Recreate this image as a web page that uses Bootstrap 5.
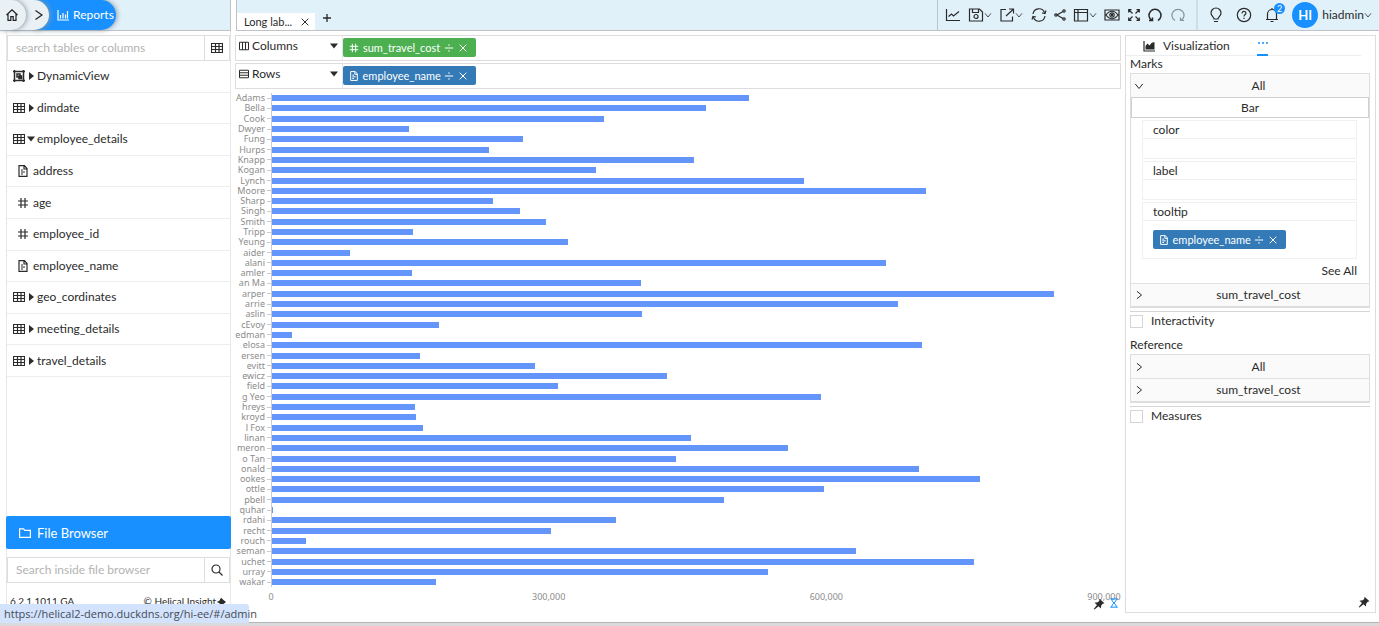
<!DOCTYPE html>
<html lang="en">
<head>
<meta charset="utf-8">
<meta name="viewport" content="width=device-width, initial-scale=1">
<title>Reports</title>
<link rel="stylesheet" href="https://cdn.jsdelivr.net/npm/bootstrap@5.3.0/dist/css/bootstrap.min.css">
<style>
:root{--sky:#e1f1fa;--line:#ddd;--edge:#bfc3c5;--blue:#1890ff;--ink:#2b2b2b}
body{font-family:Lato,"Liberation Sans",sans-serif;font-size:12px;line-height:16px;color:var(--ink);background:#fff}
button{font:inherit;color:inherit;background:none;border:0;padding:0}
svg{display:block;flex:none}
.ic{width:12px;height:12px;fill:none;stroke:currentColor;stroke-width:1.2}
.ic-lg{width:16px;height:16px}
.ic-sm{width:10px;height:10px}
.ic-xs{width:8px;height:8px}
.app{min-height:100vh}
.topbar{height:31px;gap:5px}
.topbar>div{background:var(--sky);border-bottom:1px solid var(--edge)}
.side-w{width:231px}
.crumb{height:30px;color:#222;box-shadow:1px 0 5px #8a9aa5;border-radius:0 15px 15px 0;background:#e9f1f5}
.c-home{width:26px;z-index:3;padding-left:6px}
.c-next{width:38px;margin-left:-15px;padding-left:23px;z-index:2}
.c-rep{width:83px;margin-left:-16px;padding-left:24px;background:var(--blue);color:#fff;gap:4px;text-decoration:none;z-index:1}
.tab{height:17px;width:78px;padding:0 5px 0 7px;background:#fff;font-size:11px}
.b-left{border-left:1px solid var(--edge)}
.b-right{border-right:1px solid var(--edge)}
.tools{width:442px}
.tools .acts{width:260px;padding:0 10px 0 7px;border-right:2px solid #cfdde5}
.tools .user{padding:0 7px 0 10px}
.avatar{width:26px;height:26px;background:var(--blue);color:#fff;font-size:13px;font-weight:700}
.count{width:11px;height:11px;right:-5px;top:-4px;background:var(--blue);color:#fff;font-size:9px;line-height:11px}
.sidebar{width:225px;margin-left:6px;border:solid #e6e6e6;border-width:0 1px}
.find{height:26px;border:1px solid var(--line)}
.find input{min-width:0;border:0;outline:0;padding:0 8px;font:inherit;color:#333}
.find input::placeholder{color:#b3b3b3;opacity:1}
.find button{width:25px;border-left:1px solid var(--line)}
.tree{height:316px}
.tree li{border-bottom:1px solid #eee}
.tree button{padding-left:6px;gap:2px}
.tree .leaf button{padding-left:10px;gap:4px}
.filebtn{height:33px;background:var(--blue);color:#fff;font-size:13px;border-radius:2px;padding-left:13px;gap:6px;margin:0 -1px 8px}
.foot{font-size:10px;height:39px;padding:10px 4px 0 3px}
.shelf{height:26px;border:1px solid var(--line)}
.shelf .pick{width:107px;border-right:1px solid #e6e6e6;padding:0 4px 4px 3px;gap:3px}
.pill{width:133px;height:19px;border-radius:2px;color:#fff;background:#337ab7;font-size:11px;padding:0 8px 0 6px}
.pill.num{background:#4caf50}
.chart{margin-right:17px;font-family:"Noto Sans",sans-serif;font-size:9px;line-height:10px;color:#8c8c8c}
.bars{height:494px}
.bars .name{width:30px;text-align:right}
.bars .tick{width:4px;height:1px;margin-left:2px;background:#ccc}
.bars .track{border-left:1px solid #ccc}
.bars .fill{height:6px;background:#6495fa}
.axis{margin-left:36px;height:12px;margin-top:5px}
.axis span{width:0}
.corner{right:2px;bottom:12px}
.props{width:251px;margin:4px 3px 9px 4px;border:1px solid var(--line);padding:0 5px 0 4px}
.vtabs{height:20px;margin:0 9px 0 -4px;border-bottom:1px solid #eee}
.vtabs .first{width:131px;padding-left:17px;gap:8px}
.vtabs .more{width:11px;height:20px;color:var(--blue);border-bottom:2px solid var(--blue)}
.panel{border:1px solid var(--line);border-bottom-width:2px}
.panel .hd{height:23px;background:#fafafa;padding-left:3px;border-top:1px solid #e2e2e2}
.panel .hd:first-child{border-top:0}
.panel .hd span{padding-right:4px}
.bar-btn{height:21px;border:1px solid #d0d0d0}
.slot{margin:2px 12px 0 11px;border:1px solid #f0f0f0}
.slot h3{font-size:inherit;line-height:17px;height:18px;padding-left:10px;margin:0;font-weight:400;border-bottom:1px solid #f0f0f0}
.slot .drop{min-height:19px;padding-left:10px}
.slot .drop.has{height:37px}
.rule{border-top:1px solid #d4d4d4;margin-top:3px;padding-top:1px}
.tick-box{appearance:none;width:13px;height:13px;border:1px solid #d5d5d5;background:#fff;margin:0}
.sec{height:17px}
.strip{height:4px;background:#d8dadb;border-top:1px solid #b5b5b5}
.url{left:0;bottom:3px;height:19px;width:249px;background:#d3e3fd;border-radius:0 3px 0 0;color:#444b55;font:11px/19px "Open Sans",sans-serif;padding-left:4px;z-index:5;text-decoration:none}
</style>
</head>
<body>
<svg width="0" height="0" class="position-absolute" aria-hidden="true">
<symbol id="grid" viewBox="0 0 12 12"><path d="M.5 1.5h11v9H.5zM.5 4.500h11M.5 7.500h11M4.500 1.500v9M8 1.500v9"/></symbol>
<symbol id="doc" viewBox="0 0 12 12"><path d="M2 .7h5.500L10 3.500v7.800H2zM7 .7V4h3M4 5h2M4 7h4M4 9h2"/></symbol>
<symbol id="hash" viewBox="0 0 12 12"><path d="M4 1v10M8 1v10M1 4h10M1 8h10"/></symbol>
<symbol id="right" viewBox="0 0 8 8"><path d="M2 0l5 4-5 4z" fill="currentColor" stroke="none"/></symbol>
<symbol id="down" viewBox="0 0 8 8"><path d="M0 1.500h8L4 6.500z" fill="currentColor" stroke="none"/></symbol>
<symbol id="x" viewBox="0 0 12 12"><path d="M2 2l8 8M10 2l-8 8"/></symbol>
<symbol id="divide" viewBox="0 0 12 12"><path d="M1 6h10M6 1.500v2M6 8.500v2"/></symbol>
<symbol id="chev" viewBox="0 0 12 12"><path d="M3.500 1.500L9 6l-5.500 4.500"/></symbol>
<symbol id="chevd" viewBox="0 0 12 12"><path d="M1.500 3.500L6 9l4.500-5.500"/></symbol>
<symbol id="pin" viewBox="0 0 12 12"><path d="M6.500.7l5 4.600-1.700.5-1.600 1.700-.3 3L5.500 8.300 1.500 11.500l-.8-.6L4 6.900 1.500 4.700l3.300-.4L6.300 2.700z" fill="currentColor" stroke="none"/></symbol>
</svg>
<div class="app d-flex flex-column position-relative">
<header class="topbar d-flex flex-none">
  <div class="side-w b-right d-flex flex-shrink-0">
    <button class="crumb c-home position-relative" aria-label="Home"><svg class="ic" viewBox="0 0 12 12"><path d="M.5 6L6 .8 11.500 6M2 5v6.400h2.800V7.600h2.400v3.800H10V5"/></svg></button>
    <button class="crumb c-next position-relative" aria-label="Next"><svg class="ic" viewBox="0 0 12 12"><path d="M1.500 1.500L8 6l-6.500 4.500"/></svg></button>
    <a href="#" class="crumb c-rep position-relative d-flex align-items-center"><svg class="ic" viewBox="0 0 12 12"><path d="M1 1v10h11M3.500 9.500V6M6 9.500V4M8.500 9.500V5.500M10.500 9.500V2"/></svg>Reports</a>
  </div>
  <div class="b-left flex-fill d-flex align-items-end">
    <div class="tab d-flex align-items-center justify-content-between"><span>Long lab...</span><button aria-label="Close"><svg class="ic ic-sm"><use href="#x"/></svg></button></div>
    <button class="ms-1 p-1 mb-1" aria-label="Add tab"><svg class="ic ic-xs" viewBox="0 0 12 12"><path stroke-width="2" d="M6 0v12M0 6h12"/></svg></button>
  </div>
  <div class="tools b-left d-flex flex-shrink-0" style="margin-left:-5px">
    <div class="acts d-flex align-items-center justify-content-between">
      <button aria-label="Chart"><svg class="ic ic-lg" viewBox="0 0 16 16"><path d="M1.500 2v11.500H15M3.500 9.500L6.500 7l2 2L14 4.500"/></svg></button>
      <button class="d-flex align-items-center" aria-label="Save"><svg class="ic ic-lg" viewBox="0 0 16 16"><path d="M1.500 2h10l3 3v9h-13zM4.500 2v3.500h6V2"/><circle cx="8" cy="9.500" r="2"/></svg><svg class="ic ic-xs"><use href="#chevd"/></svg></button>
      <button class="d-flex align-items-center" aria-label="Export"><svg class="ic ic-lg" viewBox="0 0 16 16"><path d="M7 2.500H2v11.500h11.500V9.500M7 9l7-6.500M10 2h4.500v4.500"/></svg><svg class="ic ic-xs"><use href="#chevd"/></svg></button>
      <button aria-label="Refresh"><svg class="ic ic-lg" viewBox="0 0 16 16"><path d="M2 7a6 6 0 0 1 11.500-1.500M14 9a6 6 0 0 1-11.500 1.500M11 6l3 .5 1-3M5 10l-3-.5-1 3"/></svg></button>
      <button aria-label="Share"><svg class="ic" viewBox="0 0 12 12"><path d="M9 2.500L3 6l6 3.500"/><circle cx="10" cy="2" r="1.200"/><circle cx="2" cy="6" r="1.200"/><circle cx="10" cy="10" r="1.200"/></svg></button>
      <button class="d-flex align-items-center" aria-label="Layout"><svg class="ic ic-lg" viewBox="0 0 16 16"><path d="M1.500 2.500h13v11.500h-13zM5 2.500V14M1.500 5.500h13"/></svg><svg class="ic ic-xs"><use href="#chevd"/></svg></button>
      <button aria-label="Preview"><svg class="ic ic-lg" viewBox="0 0 16 16"><path d="M1 3h14v10H1zM2 8c3.500-5 8.500-5 12 0-3.500 5-8.500 5-12 0z"/><circle cx="8" cy="8" r="2.200"/><circle cx="8" cy="8" r=".6"/></svg></button>
      <button aria-label="Full screen"><svg class="ic" viewBox="0 0 12 12"><path d="M1 1l3.500 3.500M11 1L7.500 4.500M1 11l3.500-3.500M11 11L7.500 7.500M.7 3.500V.7h2.800M8.500.7h2.800v2.800M.7 8.500v2.800h2.800M8.500 11.300h2.800V8.500"/></svg></button>
      <button aria-label="Undo"><svg class="ic ic-lg" viewBox="0 0 16 16"><path stroke-width="1.500" d="M5 13.500A6 6 0 1 1 11 13.500M2 13.500h3.500V10.500"/></svg></button>
      <button aria-label="Redo" class="text-secondary opacity-75"><svg class="ic ic-lg" viewBox="0 0 16 16"><path d="M5 13.500A6 6 0 1 1 11 13.500M14 13.500h-3.500V10.500"/></svg></button>
    </div>
    <div class="user d-flex align-items-center justify-content-between flex-fill">
      <button aria-label="Tips"><svg class="ic ic-lg" viewBox="0 0 16 16"><path d="M6 12c0-2-3-3-3-6a5 5 0 0 1 10 0c0 3-3 4-3 6zM6 14.500h4"/></svg></button>
      <button aria-label="Help"><svg class="ic ic-lg" viewBox="0 0 16 16"><circle cx="8" cy="8" r="6.700"/><path d="M6 6.500c0-3 4-2.500 4-.3C10 7.500 8 7.500 8 9.500M8 10.800v1.300"/></svg></button>
      <button class="position-relative" aria-label="Notifications"><svg class="ic ic-lg" viewBox="0 0 16 16"><path d="M2 12.500h12M3.500 12.500V7a4.500 4.500 0 0 1 9 0v5.500M8 1v1.500M6.500 14.500h3"/></svg><span class="count position-absolute rounded-circle">2</span></button>
      <button class="d-flex align-items-center"><span class="avatar rounded-circle d-flex align-items-center justify-content-center me-1">HI</span>hiadmin<svg class="ic ic-xs"><use href="#chevd"/></svg></button>
    </div>
  </div>
</header>

<div class="d-flex flex-fill">
  <aside class="sidebar d-flex flex-column flex-shrink-0">
    <div class="find d-flex mt-1"><input class="flex-fill" type="text" placeholder="search tables or columns" aria-label="search tables or columns"><button class="d-flex align-items-center justify-content-center" aria-label="Tables"><svg class="ic"><use href="#grid"/></svg></button></div>
    <ul class="tree list-unstyled d-flex flex-column mb-0">
      <li class="flex-fill d-flex"><button class="d-flex align-items-center w-100"><svg class="ic" viewBox="0 0 12 12"><path stroke-width="1.500" d="M1.500 1.500h9v9h-9zM4 4h3v3H4zM6 6h2.500v2.500H6zM0 1.500h2M1.500 0v2M10.500 0v2M10 1.500h2M0 10.500h2M1.500 10v2M10.500 10v2M10 10.500h2"/></svg><svg class="ic ic-xs"><use href="#right"/></svg>DynamicView</button></li>
      <li class="flex-fill d-flex"><button class="d-flex align-items-center w-100"><svg class="ic"><use href="#grid"/></svg><svg class="ic ic-xs"><use href="#right"/></svg>dimdate</button></li>
      <li class="flex-fill d-flex"><button class="d-flex align-items-center w-100"><svg class="ic"><use href="#grid"/></svg><svg class="ic ic-xs"><use href="#down"/></svg>employee_details</button></li>
      <li class="leaf flex-fill d-flex"><button class="d-flex align-items-center w-100"><svg class="ic"><use href="#doc"/></svg>address</button></li>
      <li class="leaf flex-fill d-flex"><button class="d-flex align-items-center w-100"><svg class="ic"><use href="#hash"/></svg>age</button></li>
      <li class="leaf flex-fill d-flex"><button class="d-flex align-items-center w-100"><svg class="ic"><use href="#hash"/></svg>employee_id</button></li>
      <li class="leaf flex-fill d-flex"><button class="d-flex align-items-center w-100"><svg class="ic"><use href="#doc"/></svg>employee_name</button></li>
      <li class="flex-fill d-flex"><button class="d-flex align-items-center w-100"><svg class="ic"><use href="#grid"/></svg><svg class="ic ic-xs"><use href="#right"/></svg>geo_cordinates</button></li>
      <li class="flex-fill d-flex"><button class="d-flex align-items-center w-100"><svg class="ic"><use href="#grid"/></svg><svg class="ic ic-xs"><use href="#right"/></svg>meeting_details</button></li>
      <li class="flex-fill d-flex"><button class="d-flex align-items-center w-100"><svg class="ic"><use href="#grid"/></svg><svg class="ic ic-xs"><use href="#right"/></svg>travel_details</button></li>
    </ul>
    <button class="filebtn d-flex align-items-center mt-auto"><svg class="ic" viewBox="0 0 12 12"><path d="M.6 1.800h4l1.200 1.500h5.600v7H.6z"/></svg>File Browser</button>
    <div class="find d-flex"><input class="flex-fill" type="text" placeholder="Search inside file browser" aria-label="Search inside file browser"><button class="d-flex align-items-center justify-content-center" aria-label="Search"><svg class="ic" viewBox="0 0 12 12"><circle cx="5" cy="5" r="4"/><path d="M8 8l3.500 3.500"/></svg></button></div>
    <div class="foot d-flex justify-content-between"><span>6.2.1.1011 GA</span><span class="d-flex">© Helical Insight <svg class="ic ic-sm mt-1" viewBox="0 0 12 12"><path d="M1 6l3-1.500L6 1l3 2.500L12 6 9 8.500 6 10 4 7.500z" fill="currentColor" stroke="none"/></svg></span></div>
  </aside>

  <main class="flex-fill position-relative ms-1">
    <div class="shelf d-flex mt-1">
      <button class="pick d-flex align-items-center"><svg class="ic ic-sm" viewBox="0 0 12 12"><path d="M.6 1.500h10.800v9H.6zM4.200 1.500v9M7.800 1.500v9"/></svg>Columns<svg class="ic ic-xs ms-auto"><use href="#down"/></svg></button>
      <div class="pill num d-flex align-items-center justify-content-between mt-1px" style="margin-top:2px"><svg class="ic ic-sm"><use href="#hash"/></svg><span>sum_travel_cost</span><svg class="ic ic-sm"><use href="#divide"/></svg><svg class="ic ic-sm"><use href="#x"/></svg></div>
    </div>
    <div class="shelf d-flex" style="margin-top:2px">
      <button class="pick d-flex align-items-center"><svg class="ic ic-sm" viewBox="0 0 12 12"><path d="M.6 1.500h10.800v9H.6zM.6 4.500h10.800M.6 7.500h10.800"/></svg>Rows<svg class="ic ic-xs ms-auto"><use href="#down"/></svg></button>
      <div class="pill d-flex align-items-center justify-content-between" style="margin-top:2px"><svg class="ic ic-sm"><use href="#doc"/></svg><span>employee_name</span><svg class="ic ic-sm"><use href="#divide"/></svg><svg class="ic ic-sm"><use href="#x"/></svg></div>
    </div>
    <div class="chart pt-1 mt-0">
      <div class="bars d-flex flex-column" id="bars"></div>
      <div class="axis d-flex justify-content-between"><span class="d-flex justify-content-center">0</span><span class="d-flex justify-content-center">300,000</span><span class="d-flex justify-content-center">600,000</span><span class="d-flex justify-content-center">900,000</span></div>
    </div>
    <div class="corner position-absolute d-flex gap-1"><svg class="ic"><use href="#pin"/></svg><svg class="ic ic-sm" viewBox="0 0 12 12" style="color:#1890ff"><path d="M1.500 1h9M1.500 11h9M3 1c0 4 6 6 6 10M9 1c0 4-6 6-6 10"/></svg></div>
  </main>

  <section class="props flex-shrink-0 d-flex flex-column">
    <div class="vtabs d-flex"><button class="first d-flex align-items-center"><svg class="ic" viewBox="0 0 12 12"><path d="M1 1v10h11"/><path d="M2.500 9.500V6l2-2.500 2 2 2-2.500 2-.8 1 0v7.300z" fill="currentColor" stroke="none"/></svg>Visualization</button><button class="more" aria-label="More"><svg class="ic" viewBox="0 0 12 12"><path stroke-width="1.500" stroke-dasharray="2 2" d="M1 4h10"/></svg></button></div>
    <div class="sec">Marks</div>
    <div class="panel">
      <button class="hd w-100 d-flex align-items-center"><svg class="ic ic-sm"><use href="#chevd"/></svg><span class="flex-fill ps-2">All</span></button>
      <button class="bar-btn w-100 d-block">Bar</button>
      <div class="slot"><h3>color</h3><div class="drop"></div></div>
      <div class="slot"><h3>label</h3><div class="drop"></div></div>
      <div class="slot"><h3>tooltip</h3><div class="drop has d-flex align-items-center"><div class="pill d-flex align-items-center justify-content-between"><svg class="ic ic-sm"><use href="#doc"/></svg><span>employee_name</span><svg class="ic ic-sm"><use href="#divide"/></svg><svg class="ic ic-sm"><use href="#x"/></svg></div></div></div>
      <div class="text-end"><button class="me-2 pe-1 py-1 mt-0">See All</button></div>
      <button class="hd w-100 d-flex align-items-center"><svg class="ic ic-sm"><use href="#chev"/></svg><span class="flex-fill ps-2">sum_travel_cost</span></button>
    </div>
    <div class="rule d-flex align-items-center"><input class="tick-box" type="checkbox" id="inter"><label class="ps-2" for="inter">Interactivity</label></div>
    <div class="sec mt-2">Reference</div>
    <div class="panel">
      <button class="hd w-100 d-flex align-items-center"><svg class="ic ic-sm"><use href="#chev"/></svg><span class="flex-fill ps-2">All</span></button>
      <button class="hd w-100 d-flex align-items-center"><svg class="ic ic-sm"><use href="#chev"/></svg><span class="flex-fill ps-2">sum_travel_cost</span></button>
    </div>
    <div class="rule d-flex align-items-center"><input class="tick-box" type="checkbox" id="meas"><label class="ps-2" for="meas">Measures</label></div>
    <div class="mt-auto align-self-end pb-1"><svg class="ic"><use href="#pin"/></svg></div>
  </section>
</div>
<div class="strip"></div>
<a class="url position-absolute text-nowrap" href="#">https://helical2-demo.duckdns.org/hi-ee/#/admin</a>
</div>
<script>
const costs = [["Adams",516],["Bella",469],["Cook",359],["Dwyer",148],["Fung",272],["Hurps",235],["Knapp",456],["Kogan",350],["Lynch",575],["Moore",707],["Sharp",239],["Singh",268],["Smith",296],["Tripp",153],["Yeung",320],["aider",84],["alani",664],["amler",151],["an Ma",399],["arper",846],["arrie",677],["aslin",400],["cEvoy",181],["edman",22],["elosa",703],["ersen",160],["evitt",285],["ewicz",427],["field",309],["g Yeo",594],["hreys",155],["kroyd",156],["l Fox",163],["linan",453],["meron",558],["o Tan",437],["onald",700],["ookes",766],["ottle",597],["pbell",489],["quhar",1],["rdahi",372],["recht",302],["rouch",37],["seman",632],["uchet",759],["urray",537],["wakar",177]];
document.getElementById("bars").innerHTML = costs.map(([n, v]) =>
  `<div class="d-flex align-items-center flex-fill" style="min-height:0;flex-basis:0"><span class="name">${n}</span><span class="tick"></span><span class="track flex-fill align-self-stretch d-flex align-items-center"><span class="fill" style="width:${(v / 9).toFixed(2)}%"></span></span></div>`).join("");
</script>
<script src="https://cdn.jsdelivr.net/npm/bootstrap@5.3.0/dist/js/bootstrap.bundle.min.js"></script>
</body>
</html>
